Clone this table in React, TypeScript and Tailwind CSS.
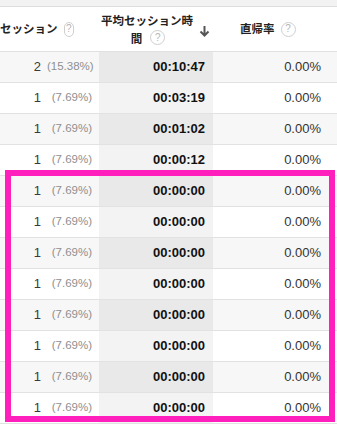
import React from "react";

const Q = () => (
  <span className="inline-flex items-center justify-center w-[15px] h-[15px] rounded-full border border-[#cfcfcf] text-[10px] text-[#b5b5b5] leading-none font-['Liberation_Sans',Arial,sans-serif] font-normal">
    ?
  </span>
);

const rows = [
  { n: "2", p: "(15.38%)", t: "00:10:47" },
  { n: "1", p: "(7.69%)", t: "00:03:19" },
  { n: "1", p: "(7.69%)", t: "00:01:02" },
  { n: "1", p: "(7.69%)", t: "00:00:12" },
  { n: "1", p: "(7.69%)", t: "00:00:00" },
  { n: "1", p: "(7.69%)", t: "00:00:00" },
  { n: "1", p: "(7.69%)", t: "00:00:00" },
  { n: "1", p: "(7.69%)", t: "00:00:00" },
  { n: "1", p: "(7.69%)", t: "00:00:00" },
  { n: "1", p: "(7.69%)", t: "00:00:00" },
  { n: "1", p: "(7.69%)", t: "00:00:00" },
  { n: "1", p: "(7.69%)", t: "00:00:00" },
];

export default function App() {
  return (
    <div className="relative w-[337px] h-[424px] overflow-hidden bg-white font-['Liberation_Sans',Arial,sans-serif]">
      <div className="h-[6px] bg-[#f2f2f2] border-b border-[#dedede] box-content" />
      <div className="grid grid-cols-[99px_114px_124px] h-[45px] border-b border-[#e0e0e0] text-[11.5px] text-[#222] font-['Noto_Sans_CJK_JP',sans-serif] font-bold">
        <div className="flex items-center justify-end pr-[25px] gap-[6px]">
          <span className="whitespace-nowrap">セッション</span>
          <Q />
        </div>
        <div className="flex items-center justify-end pr-[3px]">
          <div className="flex flex-col items-center leading-[18px] -mt-[1px]">
            <span className="whitespace-nowrap">平均セッション時</span>
            <span className="flex items-center gap-[8px] whitespace-nowrap pl-[2px]">
              間 <Q />
            </span>
          </div>
          <svg width="11" height="12" viewBox="0 0 11 12" className="ml-[6px] mt-[4px]">
            <path d="M5.5 1v9.5M1.5 6.5l4 4 4-4" stroke="#555" strokeWidth="2" fill="none" />
          </svg>
        </div>
        <div className="flex items-center pl-[27px] gap-[6px]">
          <span>直帰率</span>
          <Q />
        </div>
      </div>
      {rows.map((r, i) => {
        const odd = i % 2 === 0;
        return (
          <div
            key={i}
            className={`grid grid-cols-[99px_114px_124px] h-[31px] border-b border-[#e2e2e2] ${odd ? "bg-[#f7f7f7]" : "bg-white"}`}
          >
            <div className="flex items-center justify-end pr-[7px]">
              <span className="text-[13px] text-[#3a3a3a]">{r.n}</span>
              <span className="w-[45px] ml-[6px] text-right text-[11.5px] text-[#8f8f8f] whitespace-nowrap">{r.p}</span>
            </div>
            <div className={`flex items-center justify-end pr-[8px] text-[13px] font-bold text-[#111] ${odd ? "bg-[#e9e9e9]" : "bg-[#f3f3f3]"}`}>
              {r.t}
            </div>
            <div className="flex items-center justify-end pr-[16px] text-[13px] text-[#333]">0.00%</div>
          </div>
        );
      })}
      <div className="absolute left-[5px] top-[170px] w-[330px] h-[252px] border-[6px] border-[#ff1fbd] pointer-events-none" />
    </div>
  );
}
